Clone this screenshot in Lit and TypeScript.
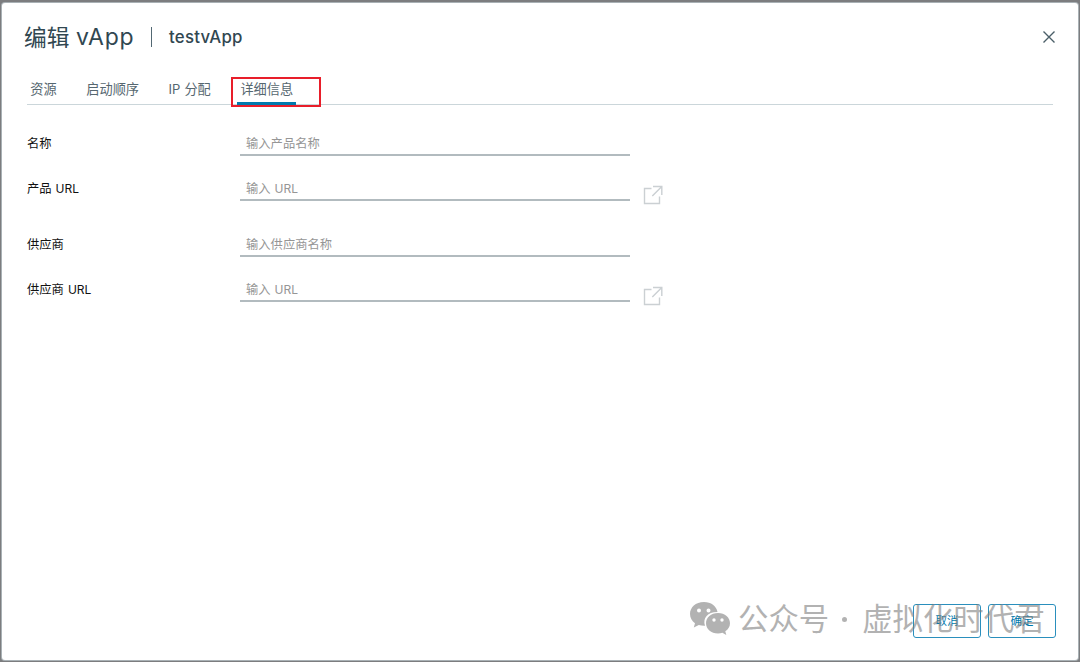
import { LitElement, html, svg, css } from "lit";
import { customElement } from "lit/decorators.js";

interface Field {
  label: string;
  latin?: string;
  hint: string;
  hintLatin?: string;
  link?: boolean;
}

const FIELDS: Field[] = [
  { label: "名称", hint: "输入产品名称" },
  { label: "产品", latin: "URL", hint: "输入", hintLatin: "URL", link: true },
  { label: "供应商", hint: "输入供应商名称" },
  { label: "供应商", latin: "URL", hint: "输入", hintLatin: "URL", link: true },
];

const popOut = svg`<path d="M8.500 3.500H1.500V18.500H16.500V11.500M10 1.500H18.800V10M18.800 1.500L9.300 11" />`;

@customElement("app-root")
export class AppRoot extends LitElement {
  static styles = css`
    :host {
      display: block;
      box-sizing: border-box;
      width: 1080px;
      height: 662px;
      padding: 3px 2px 2px;
      background: #7c7d7f;
      overflow: hidden;
      position: relative;
      font-family: "Noto Sans CJK SC", sans-serif;
      white-space: nowrap;
    }
    * { box-sizing: border-box; }
    .dialog {
      display: flex;
      flex-direction: column;
      width: 1076px;
      height: 657px;
      background: #fff;
      border-radius: 3px;
      box-shadow: 0 0 0 1px #a9b1b5;
    }
    .head {
      display: flex;
      align-items: center;
      height: 68px;
      padding: 0 22px 0 22px;
      color: #314751;
    }
    .title { display: flex; width: 111px; font-size: 22.7px; line-height: 34px; }
    .title .latin { font: 400 23px/34px Inter, sans-serif; letter-spacing: 0.8px; margin-left: 6.5px; }
    .bar { width: 1px; height: 20px; margin: 0 17px 0 16px; background: #526873; }
    .name { font: 450 16.8px/34px Inter, sans-serif; letter-spacing: 0.25px; }
    .close { margin-left: auto; width: 14px; height: 14px; }
    .close path { stroke: #4b5f69; stroke-width: 1.4; fill: none; }
    .tabs {
      display: flex;
      height: 34px;
      margin: 0 25px;
      border-bottom: 1px solid #cbd6da;
    }
    .tab {
      height: 34px;
      margin-right: 23px;
      padding: 5px 3.3px 0;
      font-size: 13.2px;
      line-height: 26px;
      color: #566770;
    }
    .tab .latin { font: 400 13px/26px Inter, sans-serif; margin-right: 4px; }
    .tab.active { box-shadow: inset 0 -3px #0079ad; }
    .form {
      display: grid;
      grid-template-columns: 213px 390px 40px;
      grid-template-rows: 45px 56px 45px 45px;
      padding: 26px 0 0 25px;
      flex: 1;
    }
    .label, .input { height: 25px; font-size: 12.3px; line-height: 24px; color: #111; }
    .label .latin, .input .latin { font: 400 12px/24px Inter, sans-serif; margin-left: 4px; }
    .input { padding-left: 6px; color: #969696; border-bottom: 2px solid #b2bbbf; }
    .link { display: block; width: 20px; height: 20px; margin: 9px 0 0 13px; }
    .link path { fill: none; stroke: #cbd0d3; stroke-width: 1.4; }
    .foot {
      display: flex;
      justify-content: flex-end;
      gap: 7px;
      padding: 0 22px 22px 0;
    }
    .btn {
      width: 68px;
      height: 34px;
      border: 1px solid #2a8fbd;
      border-radius: 3px;
      text-align: center;
      font-size: 11.5px;
      line-height: 31px;
      color: #0079ad;
    }
    .mark-box {
      position: absolute;
      left: 231px;
      top: 77px;
      width: 90px;
      height: 30px;
      border: 2px solid #e81e2a;
    }
    .watermark {
      position: absolute;
      left: 689px;
      top: 595px;
      display: flex;
      align-items: center;
      height: 44px;
      color: #808080;
      opacity: 0.6;
      font-size: 30.4px;
      line-height: 44px;
    }
    .watermark svg { width: 42px; height: 34px; margin: 2px 7px 0 0; }
    .dot { width: 5px; height: 5px; border-radius: 50%; background: #808080; margin: 4px 15px 0 13px; }
  `;

  private renderField(f: Field) {
    return html`
      <div class="label">${f.label}${f.latin ? html`<span class="latin">${f.latin}</span>` : ""}</div>
      <div class="input">${f.hint}${f.hintLatin ? html`<span class="latin">${f.hintLatin}</span>` : ""}</div>
      <div>${f.link ? html`<svg class="link" viewBox="0 0 20 20">${popOut}</svg>` : ""}</div>
    `;
  }

  render() {
    return html`
      <div class="dialog">
        <div class="head">
          <div class="title">编辑<span class="latin">vApp</span></div>
          <div class="bar"></div>
          <div class="name">testvApp</div>
          <svg class="close" viewBox="0 0 14 14"><path d="M1.500 1.500L12.500 12.500M12.500 1.500L1.500 12.500" /></svg>
        </div>
        <div class="tabs">
          <div class="tab">资源</div>
          <div class="tab">启动顺序</div>
          <div class="tab"><span class="latin">IP</span>分配</div>
          <div class="tab active">详细信息</div>
        </div>
        <div class="form">${FIELDS.map((f) => this.renderField(f))}</div>
        <div class="foot">
          <div class="btn">取消</div>
          <div class="btn">确定</div>
        </div>
      </div>
      <div class="mark-box"></div>
      <div class="watermark">
        <svg viewBox="0 0 42 34">
          <path fill="#808080" fill-rule="evenodd" d="M15 1C6.500 1 1 6.500 1 13c0 4 2 7 5 9.200L4.800 26.500l5-2.600c2 .6 4 .9 6.200.8C13.500 17 19 10.800 28.500 11C27.500 5 22 1 15 1ZM10 7.500a2 2 0 1 1 0 4a2 2 0 0 1 0-4ZM19.500 7.500a2 2 0 1 1 0 4a2 2 0 0 1 0-4Z" />
          <path fill="#808080" fill-rule="evenodd" d="M29 12C22 12 17 16.700 17 22.300C17 28 22 32.500 29 32.500c1.700 0 3-.2 4.400-.7L37.300 34l-1-3.700C39.200 28.500 41 25.600 41 22.300C41 16.700 36 12 29 12ZM25 17.300a1.700 1.700 0 1 1 0 3.400a1.700 1.700 0 0 1 0-3.400ZM33 17.300a1.700 1.700 0 1 1 0 3.400a1.700 1.700 0 0 1 0-3.400Z" />
        </svg>
        <span>公众号</span><span class="dot"></span><span>虚拟化时代君</span>
      </div>
    `;
  }
}
